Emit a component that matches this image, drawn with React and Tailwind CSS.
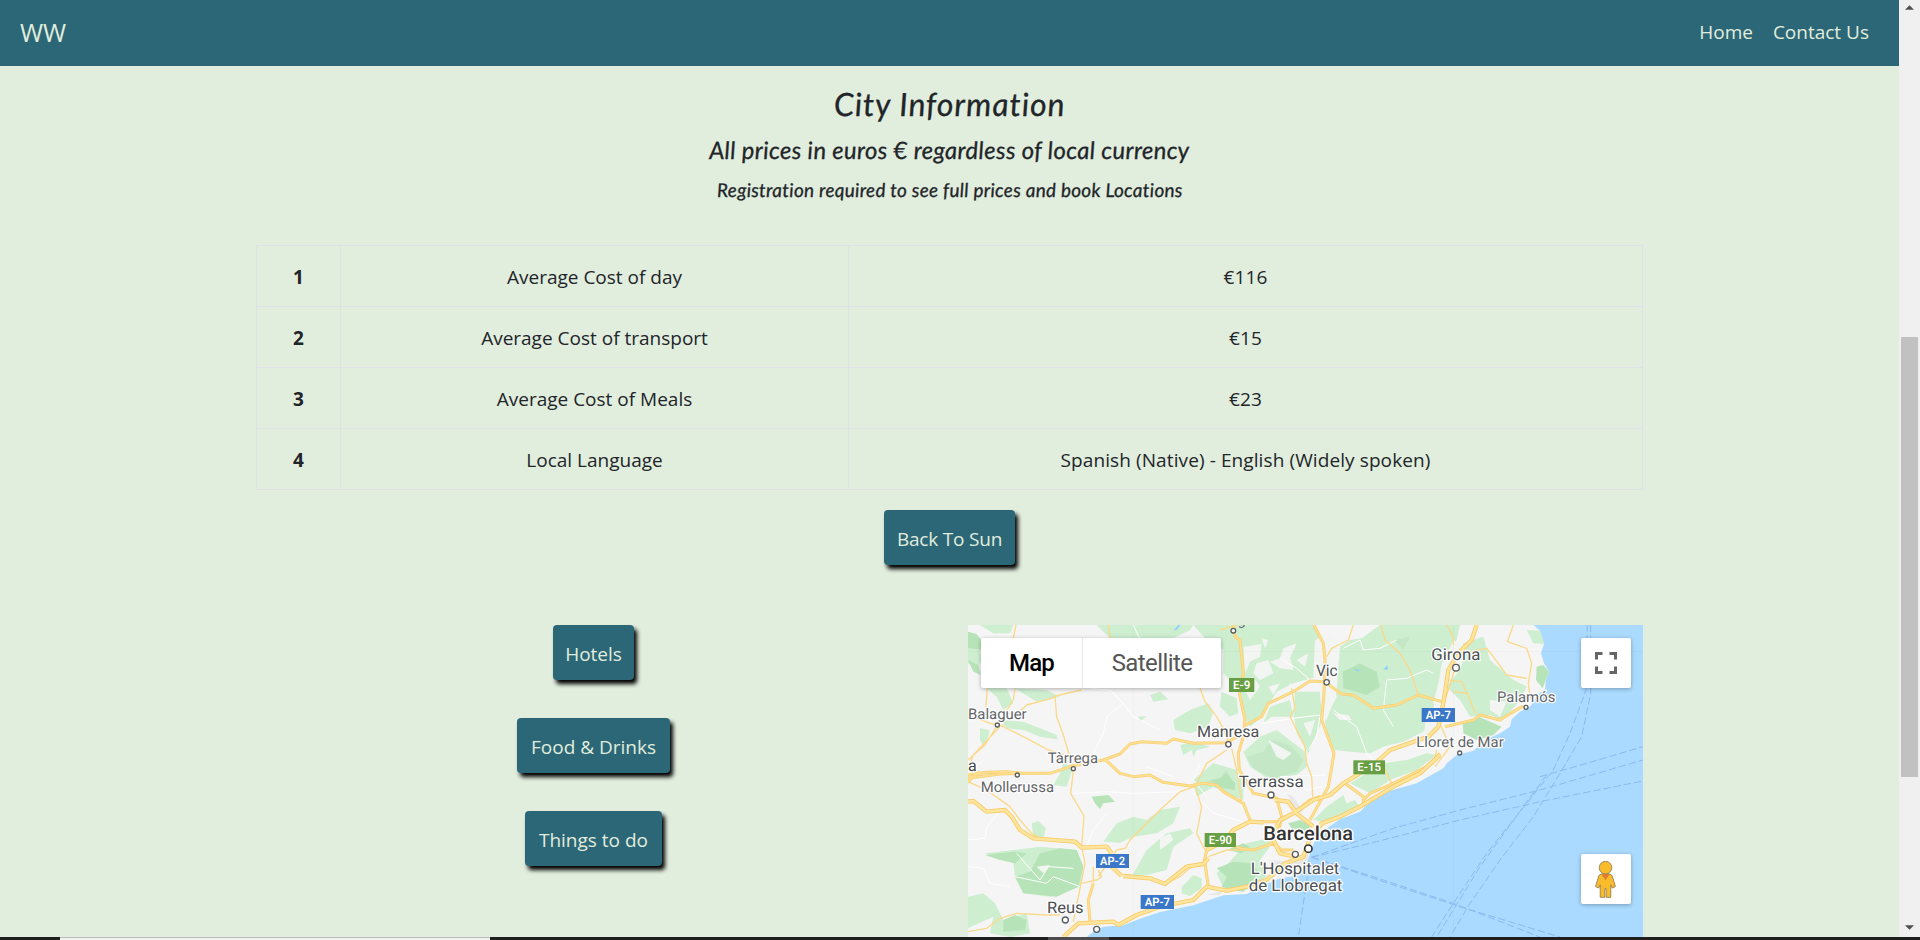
const ROWS = [
  ['1', 'Average Cost of day', '€116'],
  ['2', 'Average Cost of transport', '€15'],
  ['3', 'Average Cost of Meals', '€23'],
  ['4', 'Local Language', 'Spanish (Native) - English (Widely spoken)'],
];

const LAND =
  'M24 15H1720L1740 32L1752 72L1743 100L1752 130L1767 155L1758 180L1755 208L1735 222L1712 258L1680 275L1655 298L1650 320L1620 340L1580 358L1540 392L1490 405L1462 428L1450 445L1370 490L1290 512L1230 545L1200 575L1140 598L1085 636L1062 668L1050 700L1040 732L1020 766L960 775L920 792L860 822L790 826L700 856L600 876L540 896L490 916L430 920L400 935L380 951H24Z';

// Light vegetation
const GREEN = [
  'M24 85L60 90L64 120L50 150L24 130Z',
  'M60 15H160L150 40H100Z',
  'M410 15H700L690 30L640 54H450Z',
  'M700 15H1065L1080 60L1090 120L1070 170L1000 190L950 215L905 290L870 320L845 270L830 200L790 160L790 90L740 60Z',
  'M784 215L830 235L835 280L810 290L780 260Z',
  'M1005 215L1080 215L1088 300L1070 340L1045 400L1010 340L1000 280Z',
  'M930 260L990 240L1000 290L935 290L910 310Z',
  'M850 395L900 350L950 330L1035 395L1040 440L1010 465L930 480L870 440Z',
  'M80 205L140 205L160 250L130 270L110 230Z',
  'M165 205L260 210L300 230L230 245Z',
  'M120 300L190 305L240 325L290 345L292 358L240 350L190 330L140 325Z',
  'M60 325L88 330L85 350L70 378L60 360Z',
  'M570 225L600 215L625 238L580 245Z',
  'M535 290L560 288L540 305Z',
  'M640 300L690 270L745 250L760 275L745 320L690 340L645 330Z',
  'M660 375L700 365L750 380L735 385L710 390L700 410L695 390L670 405Z',
  'M700 480L760 430L830 450L850 490L850 540L820 530L760 500L710 530Z',
  'M310 430L340 440L320 500L280 495L300 460Z',
  'M430 665L470 610L520 590L560 600L600 570L660 560L640 610L590 640L520 650L480 668Z',
  'M515 770L560 690L620 640L690 625L700 640L640 680L620 750L560 765Z',
  'M215 610L235 603L258 625L250 655L220 652Z',
  'M75 700L160 690L240 680L350 690L370 740L360 800L270 830L190 820L165 770L160 730Z',
  'M24 830L70 820L105 850L130 900L200 880L210 940L150 951L90 940L100 890L24 925Z',
  'M665 800L700 765L725 775L725 805L690 828L665 820Z',
  'M770 760L800 735L860 670L925 655L930 680L900 720L920 770L850 815L790 805Z',
  'M1140 80L1170 60L1205 55L1260 15H1500L1490 60L1445 130L1430 230L1400 330L1330 365L1270 380L1230 400L1170 395L1122 390L1100 350L1095 300L1130 230L1120 150Z',
  'M1510 70L1570 50L1590 120L1660 180L1700 200L1680 240L1630 300L1590 285L1530 290L1500 240L1460 200L1490 140Z',
  'M1700 30L1740 32L1752 72L1720 70Z',
  'M1170 490L1270 430L1340 420L1400 400L1430 405L1370 450L1290 480L1230 520Z',
  'M1100 560L1150 525L1160 550L1185 540L1200 560L1150 580L1090 605L1060 600Z',
];

// Dense forest
const FOREST = [
  'M24 35L50 42L64 60V90L24 85Z',
  'M24 120L55 135L62 165L40 155Z',
  'M165 770L210 755L240 700L300 685L350 690L370 740L355 800L290 830L190 820Z',
  'M75 705L160 695L200 700L165 730L120 720Z',
  'M130 900L165 885L200 900L195 930L130 935Z',
  'M395 530L445 525L465 545L430 550L420 568L405 550Z',
  'M750 480L780 475L800 460L825 490L825 510L790 505Z',
  'M770 745L820 725L880 730L895 760L850 815L785 800L800 770Z',
  'M800 690L850 670L870 680L845 700Z',
  'M1148 155L1200 130L1250 155L1260 200L1220 225L1150 205Z',
  'M1508 310L1560 292L1625 320L1600 345L1550 360L1510 340Z',
  'M1730 140L1750 135L1767 155L1758 180L1748 205L1728 180Z',
  'M985 610L1020 600L1050 615L1045 645L1000 635Z',
];

const SOFT_FOREST = [
  'M860 410L910 395L935 360L990 375L1030 420L1010 455L940 475L880 445Z',
  'M720 490L780 475L800 450L820 500L780 505Z',
  'M1300 60L1350 50L1330 90Z',
];

// Bare and built-up patches
const PATCHES = [
  'M850 80L905 72L900 110L870 125L855 160Z', 'M970 85L1010 70L990 115L1000 150L960 145L930 125L960 115Z',
  'M905 55L925 60L915 85Z', 'M925 360L995 400L970 420L950 410Z', 'M890 130L925 120L940 160L900 180L880 160Z',
  'M850 185L880 170L900 200L870 240L855 210Z', 'M925 200L960 190L940 225Z', 'M1010 120L1045 100L1035 140Z',
  'M990 190L1010 200L985 240L960 245Z', 'M1065 60L1110 40L1140 80L1130 210L1100 300L1085 290L1080 210L1060 165Z',
  'M1480 60L1520 90L1500 150L1460 200L1445 270L1420 250L1450 130Z',
  'M1400 270L1450 260L1470 330L1430 390L1390 360Z', 'M1030 310L1065 300L1050 350Z',
  'M600 655L630 640L640 660L600 690Z', 'M230 740L270 735L250 760Z',
  'M1590 240L1640 245L1620 290L1590 270Z', 'M1120 280L1165 285L1175 300L1140 300Z',
];

const CITY = [
  'M980 520L1000 530L1030 575L1010 580Z', 'M985 740L1030 700L1048 705L1035 735L1010 750Z',
  'M930 720L985 725L960 745L930 750Z', 'M740 825L790 812L780 825Z',
];

const MOUNTAIN_LINES =
  'M395 205L450 210L490 250L520 290L600 330M490 250L440 290L430 340L400 400M340 520L440 515L520 520L660 515M24 660L75 655L80 620L130 560M440 580L400 630L380 680M24 740L70 745L90 790L150 800M165 770L260 790L280 770L360 800M170 700L240 780L265 740L340 745M520 15L560 100L640 150M1150 85L1200 60L1210 90L1260 85L1310 60M1120 270L1190 320L1220 400L1250 430M1300 320L1270 270L1280 180L1340 175L1400 150L1420 160M1045 390L1070 350L1080 290M720 430L700 480L740 530M560 440L640 470M24 460L70 420M905 310L1000 295L1080 285M960 115L1010 145L1050 180M700 520L760 580L850 605M960 470L1100 465M1000 480L1040 510L1090 500';

const MINOR_ROADS =
  'M168 15L160 54M445 15L450 54M24 420L75 375L110 320L160 240L165 205M75 295L82 205M125 318L200 355L265 390L335 410M40 290L90 310L130 318M150 300L200 255L275 235L285 228L365 210M285 228L290 290L310 345L332 420L340 455L332 520L372 588L365 680L375 730L340 905M24 485L80 510L150 560L180 600L215 640L240 655M415 770L470 690L495 685L510 660L600 570L660 515L705 500M705 500L725 560L710 640L735 690M720 205L735 245L770 290L790 325L805 370M710 490L740 430L800 390M24 935L80 925L120 895L170 880L260 885L300 885M365 790L410 780L425 770L415 750M400 740V790M620 790L660 770L700 735M995 205L1005 265L990 290L1035 380L1040 430L1055 470L1058 530M1100 110L1115 85L1165 60L1180 15M1262 15L1275 60L1320 100L1350 150L1375 225L1420 235M1460 15L1480 50V75M1660 15L1642 65L1700 85L1715 130L1705 190L1712 240M1500 100L1580 85L1600 110L1640 165L1700 175M1484 150L1455 240M1468 180L1505 185L1530 240L1545 280M1480 215L1520 220M1430 390L1420 430M1270 440L1295 490M815 385L830 450L845 550M780 30L830 15M24 445L40 405L120 320M1435 300L1470 380L1425 440M745 710L800 690L870 690';

const MAJOR_ROADS =
  'M24 465L80 457L140 455L190 460L270 460L340 437L430 420L480 402L510 372L545 365L620 370L640 357L700 370L800 368L840 345M435 418L480 460L520 470L570 465L610 487L690 498L730 490L770 495L790 515L850 550L870 600M24 475L120 462L190 460M24 485L60 455M820 15L825 50L840 60L850 160L838 220L855 300L850 350L835 400L838 450L880 520L950 535L965 590L955 640L930 670M857 315L905 290L925 250L1000 215L1050 183L1095 185L1125 208L1145 222L1180 225L1240 265L1310 255L1375 225L1445 245M1062 15L1090 70L1095 120L1092 220L1085 300L1122 400L1105 500L1050 600M730 735L740 690L790 665L840 685L880 690L940 670M400 790L385 840L390 905M745 800L735 730M870 605L960 605L1000 580L1050 540L1080 530M940 670L965 690L1000 690M1455 320L1540 300L1560 285L1620 300L1660 275L1690 258M1155 490L1210 530V560M1440 400L1400 440L1300 490L1230 520L1210 540';

const MOTORWAYS =
  'M24 545L40 543L80 575L135 570L155 590L180 630L220 655L345 665L365 683L440 680L455 700M490 768L570 775L615 792L680 740L730 732L745 715M740 690L790 665L820 630L870 605L910 607M455 740L485 768M310 951L355 910L460 905L475 915L530 885L600 860L700 840L740 800L800 812L860 800L920 780L975 730L1030 710L1052 650L1085 612M1550 15L1535 60L1495 100L1465 150L1450 250L1435 320L1405 350L1290 390L1240 435L1150 490L1110 525L1060 540L1000 580L960 600L935 650L960 700L1030 715M1080 612L1140 590L1200 560L1300 500L1380 460L1440 405M945 540L985 545L1010 580L1060 620';

const FERRIES =
  'M1882 15L1878 210L1830 340L1780 450L1700 550L1580 700L1480 850L1415 951M1892 15V220L1865 350L1800 460L1720 590L1620 720L1530 850L1470 951M1760 465L1690 560L1560 740L1430 951M1055 712L1300 625L1500 570L1740 510L2049 420M1055 712L1250 665L1500 600L1740 545L2049 483M1740 470L1880 430L2049 380M1055 712L1240 770L1480 850L1740 951M1055 712L1300 795L1500 860L1800 951M1042 770L1015 951';

const LABELS = [
  ['Balaguer', 24, 298, 176, 44, '#5f6468'], ['Tàrrega', 263, 430, 151, 44, '#5f6468'],
  ['Mollerussa', 62, 515, 220, 44, '#5f6468'], ['a', 24, 453, 26, 48, '#444'],
  ['Manresa', 711, 352, 187, 48, '#4b4f52'], ['Terrassa', 836, 501, 195, 48, '#4b4f52'],
  ["L'Hospitalet", 872, 762, 266, 49, '#4b4f52'], ['de Llobregat', 866, 813, 281, 49, '#4b4f52'],
  ['Reus', 261, 878, 110, 48, '#4b4f52'], ['Vic', 1068, 167, 65, 48, '#4b4f52'],
  ['Girona', 1414, 121, 147, 49, '#4b4f52'], ['Palamós', 1611, 245, 175, 44, '#5f6468'],
  ['Lloret de Mar', 1369, 382, 262, 44, '#5f6468'],
];

const DOTS = [
  [112, 315, 6], [172, 465, 6], [340, 446, 6], [805, 373, 8], [933, 525, 9],
  [1006, 703, 9], [316, 900, 9], [410, 928, 9], [820, 32, 7], [1100, 187, 8],
  [1488, 143, 10], [1698, 262, 6], [1499, 399, 6],
];

const SHIELDS = [
  ['E-9', 807, 174, 76, '#689f42'], ['E-90', 734, 639, 94, '#689f42'], ['E-15', 1180, 421, 95, '#689f42'],
  ['AP-2', 408, 702, 99, '#3a77c9'], ['AP-7', 542, 825, 100, '#3a77c9'], ['AP-7', 1385, 264, 100, '#3a77c9'],
];

function MapDrawing() {
  return (
    <svg viewBox="24 15 2025 936" preserveAspectRatio="none" textRendering="geometricPrecision" className="block h-full w-full font-['Roboto',sans-serif]">
      <rect x="24" y="15" width="2025" height="936" fill="#aadaff" />
      <path d={LAND} fill="#f5f5f5" />
      {GREEN.map((d) => <path key={d} d={d} fill="#ceeed0" />)}
      {SOFT_FOREST.map((d) => <path key={d} d={d} fill="#c4e8c6" />)}
      {FOREST.map((d) => <path key={d} d={d} fill="#b7e3b9" />)}
      {PATCHES.map((d) => <path key={d} d={d} fill="#f3f5f3" />)}
      {CITY.map((d) => <path key={d} d={d} fill="#e8e8e8" />)}
      <path d="M24 95H2049M520 15V951M1481 15V951" stroke="#000" strokeOpacity=".04" strokeWidth="2" />
      <g fill="none" strokeLinejoin="round">
        <path d={MOUNTAIN_LINES} stroke="#fff" strokeWidth="3" />
        <path d={FERRIES} stroke="#8db9ef" strokeWidth="3" strokeDasharray="22 9" />
        <path d={MINOR_ROADS} stroke="#fbd98a" strokeWidth="4" />
        <path d={MAJOR_ROADS} stroke="#f8cf73" strokeWidth="9" />
        <path d={MAJOR_ROADS} stroke="#fddf8f" strokeWidth="5" />
        <path d={MOTORWAYS} stroke="#f7ca66" strokeWidth="13" />
        <path d={MOTORWAYS} stroke="#ffe59b" strokeWidth="8" />
      </g>
      <path d="M640 32L655 15H662L650 30ZM1270 148L1282 136L1284 150ZM1180 145L1205 152L1190 154Z" fill="#8fd0ff" />
      {SHIELDS.map(([t, x, y, w, fill]) => (
        <g key={t + x}>
          <rect x={x} y={y} width={w} height="42" fill={fill} />
          <text x={x + 12} y={y + 33} textLength={w - 24} lengthAdjust="spacingAndGlyphs" fontSize="35" fontWeight="600" fill="#fff">{t}</text>
        </g>
      ))}
      {DOTS.map(([x, y, r]) => <circle key={x} cx={x} cy={y} r={r} fill="#fff" stroke="#5a5d60" strokeWidth="4" />)}
      <circle cx="1045" cy="686" r="11" fill="#fff" stroke="#333" strokeWidth="5" />
      <text x="833" y="15" fontSize="42" fill="#5f6468">g</text>
      {LABELS.map(([t, x, y, w, size, fill]) => (
        <text key={t} x={x} y={y} textLength={w} lengthAdjust="spacingAndGlyphs" fontSize={size} fill={fill} stroke="#fff" strokeWidth="7" strokeLinejoin="round" paintOrder="stroke">{t}</text>
      ))}
      <text x="910" y="659" textLength="269" lengthAdjust="spacingAndGlyphs" fontSize="58" fontWeight="500" fill="#333" stroke="#fff" strokeWidth="8" strokeLinejoin="round" paintOrder="stroke">Barcelona</text>
    </svg>
  );
}

function Pegman() {
  return (
    <svg viewBox="0 0 62 112" className="mr-[2px] h-[37px] w-[21px]">
      <path d="M19 39L11 44L1 77L10 82L15 72V110H29V84H33V110H47V72L52 82L61 77L51 44L43 39Z" fill="#fbbc2c" stroke="#8a7a50" strokeWidth="2.5" strokeLinejoin="round" />
      <path d="M18 39H44L31 58Z" fill="#e07f2c" />
      <circle cx="31" cy="20" r="19" fill="#fbbc2c" stroke="#8a7a50" strokeWidth="2.5" />
    </svg>
  );
}

function Button({ children, className }) {
  return (
    <button className={`flex h-[55px] items-center justify-center whitespace-nowrap rounded-[4px] bg-[#2c6777] pt-[3px] text-[19px] text-[#e1eddd] shadow-[3px_4px_4px_#000] ${className}`}>
      {children}
    </button>
  );
}

function Scrollbar() {
  return (
    <div className="flex w-[21px] shrink-0 flex-col items-center bg-[#f0f0f0]">
      <svg viewBox="0 0 10 5" className="mt-[5px] h-[5px] w-[9px]"><path d="M0 5L5 0L10 5Z" fill="#505050" /></svg>
      <div className="mt-[327px] h-[440px] w-[17px] bg-[#c1c1c1]" />
      <svg viewBox="0 0 10 5" className="mt-auto mb-[7px] h-[5px] w-[9px]"><path d="M0 0L5 5L10 0Z" fill="#505050" /></svg>
    </div>
  );
}

export default function App() {
  return (
    <div className="flex h-[940px] w-full flex-col overflow-hidden bg-[#e1eddd] font-['Open_Sans',sans-serif] text-[#212529]">
      <div className="flex h-[937px] overflow-hidden">
        <div className="flex min-w-0 flex-1 flex-col">
          <nav className="flex h-[66px] shrink-0 items-center justify-between bg-[#2c6777] pr-[30px] pl-5 text-[#e1eddd]">
            <a className="text-[25px]">WW</a>
            <div className="flex gap-5 pb-0.5 text-[19px]">
              <a>Home</a>
              <a>Contact Us</a>
            </div>
          </nav>

          <main className="mx-auto w-[1387px]">
            <header className="flex flex-col items-center pt-[18px] font-[Lato,sans-serif] whitespace-nowrap italic [-webkit-text-stroke:0.3px_#212529]">
              <h1 className="h-[47px] skew-x-[3deg] text-[32px] leading-[39px] tracking-[0.9px]">City Information</h1>
              <h2 className="h-[40px] skew-x-[3deg] text-[24px] leading-[38px] tracking-[0.28px]">All prices in euros € regardless of local currency</h2>
              <h3 className="mb-[36px] h-[38px] skew-x-[3deg] text-[19px] leading-[38px] tracking-[0.25px]">Registration required to see full prices and book Locations</h3>
            </header>

            <table className="w-full table-fixed border-collapse text-center text-[19px]">
              <colgroup>
                <col className="w-[84px]" />
                <col className="w-[508px]" />
                <col />
              </colgroup>
              <tbody>
                {ROWS.map(([n, name, value]) => (
                  <tr key={n} className="h-[61px]">
                    <th className="border border-[#dee2e6] pt-[3px] font-bold">{n}</th>
                    <td className="border border-[#dee2e6] pt-[3px]">{name}</td>
                    <td className="border border-[#dee2e6] pt-[3px] tracking-[0.1px]">{value}</td>
                  </tr>
                ))}
              </tbody>
            </table>

            <div className="mt-5 flex justify-center">
              <Button className="w-[131px] tracking-[-0.2px]">Back To Sun</Button>
            </div>

            <div className="mt-[60px] flex justify-between">
              <div className="flex w-[675px] flex-col items-center gap-[38px]">
                <Button className="w-[81px]">Hotels</Button>
                <Button className="w-[153px]">Food &amp; Drinks</Button>
                <Button className="w-[137px]">Things to do</Button>
              </div>
              <div className="relative h-[312px] w-[675px] overflow-hidden">
                <MapDrawing />
                <div className="absolute top-[13px] left-[13px] flex h-[50px] rounded-[2px] bg-white font-[Roboto,sans-serif] text-[24px] leading-[48px] shadow-[0_1px_4px_rgba(0,0,0,0.3)]">
                  <button className="w-[102px] border-r border-[#e8e8e8] font-medium text-black tracking-[-0.8px]">Map</button>
                  <button className="w-[138px] text-[#565656] tracking-[-0.6px]">Satellite</button>
                </div>
                <button className="absolute top-[13px] right-[12px] flex size-[50px] items-center justify-center rounded-[2px] bg-white shadow-[0_1px_4px_rgba(0,0,0,0.3)]">
                  <svg viewBox="0 0 22 22" className="size-[22px]" fill="none" stroke="#666" strokeWidth="3">
                    <path d="M1.5 7.5V1.5H7.5M14.5 1.5H20.5V7.5M20.5 14.5V20.5H14.5M7.5 20.5H1.5V14.5" />
                  </svg>
                </button>
                <button className="absolute right-[12px] bottom-[33px] flex size-[50px] items-center justify-center rounded-[2px] bg-white shadow-[0_1px_4px_rgba(0,0,0,0.3)]">
                  <Pegman />
                </button>
              </div>
            </div>
          </main>
        </div>
        <Scrollbar />
      </div>
      <div className="flex h-[3px] shrink-0 bg-[#1f1f1f]">
        <div className="ml-[60px] w-[430px] border-t border-[#bbb] bg-[#f2f2f2]" />
        <div className="ml-[558px] w-[61px] bg-[#4c4c4e]" />
      </div>
    </div>
  );
}
